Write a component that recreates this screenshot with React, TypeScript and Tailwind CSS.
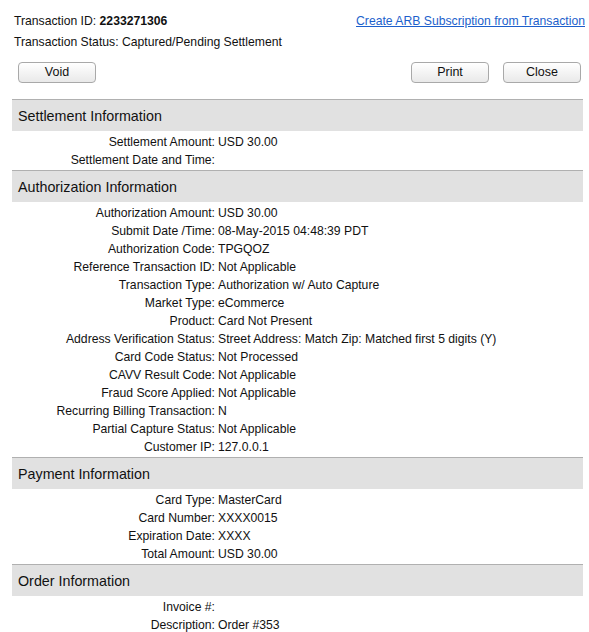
import React from "react";

type Row = [string, string];

interface Section {
  title: string;
  rows: Row[];
}

const sections: Section[] = [
  {
    title: "Settlement Information",
    rows: [
      ["Settlement Amount:", "USD 30.00"],
      ["Settlement Date and Time:", ""],
    ],
  },
  {
    title: "Authorization Information",
    rows: [
      ["Authorization Amount:", "USD 30.00"],
      ["Submit Date /Time:", "08-May-2015 04:48:39 PDT"],
      ["Authorization Code:", "TPGQOZ"],
      ["Reference Transaction ID:", "Not Applicable"],
      ["Transaction Type:", "Authorization w/ Auto Capture"],
      ["Market Type:", "eCommerce"],
      ["Product:", "Card Not Present"],
      ["Address Verification Status:", "Street Address: Match Zip: Matched first 5 digits (Y)"],
      ["Card Code Status:", "Not Processed"],
      ["CAVV Result Code:", "Not Applicable"],
      ["Fraud Score Applied:", "Not Applicable"],
      ["Recurring Billing Transaction:", "N"],
      ["Partial Capture Status:", "Not Applicable"],
      ["Customer IP:", "127.0.0.1"],
    ],
  },
  {
    title: "Payment Information",
    rows: [
      ["Card Type:", "MasterCard"],
      ["Card Number:", "XXXX0015"],
      ["Expiration Date:", "XXXX"],
      ["Total Amount:", "USD 30.00"],
    ],
  },
  {
    title: "Order Information",
    rows: [
      ["Invoice #:", ""],
      ["Description:", "Order #353"],
    ],
  },
];

const Btn = ({ label }: { label: string }) => (
  <button className="w-[78px] h-[21px] rounded-[4px] border border-[#a9a9a9] bg-gradient-to-b from-white to-[#e9e9e9] text-[12.5px] leading-none text-[#111]">
    {label}
  </button>
);

const App = () => {
  return (
    <div className="min-h-screen bg-white text-[#111] text-[12.2px] font-['Liberation_Sans',Arial,sans-serif]">
      {/* Header */}
      <div className="pl-[14px] pr-[4px] pt-[13px]">
        <div className="flex justify-between items-center h-[16px]">
          <div>
            Transaction ID: <span className="font-bold">2233271306</span>
          </div>
          <a href="#" className="text-[#1c5fcc] underline">
            Create ARB Subscription from Transaction
          </a>
        </div>
        <div className="mt-[5px] h-[16px] flex items-center">
          Transaction Status: Captured/Pending Settlement
        </div>
      </div>

      {/* Buttons */}
      <div className="flex justify-between pl-[18px] pr-[8px] mt-[12px]">
        <Btn label="Void" />
        <div className="flex gap-[14px]">
          <Btn label="Print" />
          <Btn label="Close" />
        </div>
      </div>

      {/* Sections */}
      <div className="ml-[12px] mr-[6px] mt-[16px]">
        {sections.map((s) => (
          <div key={s.title}>
            <div className="h-[32px] pt-[2px] border-t border-[#b0b0b0] bg-[#e1e1e1] flex items-center pl-[6px] text-[14.3px]">
              {s.title}
            </div>
            <div className="pt-[2px] pb-[1px]">
              {s.rows.map(([label, value]) => (
                <div key={label} className="flex h-[18px] items-center">
                  <div className="w-[203px] text-right">{label}</div>
                  <div className="pl-[3px]">{value}</div>
                </div>
              ))}
            </div>
          </div>
        ))}
      </div>
    </div>
  );
};

export default App;
